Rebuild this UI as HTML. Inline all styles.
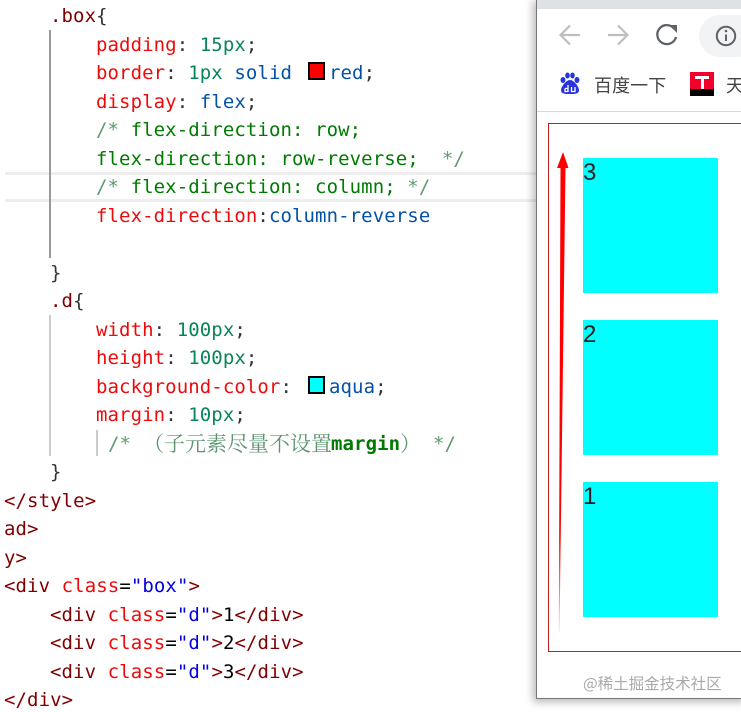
<!DOCTYPE html>
<html><head><meta charset="utf-8"><style>
html,body{margin:0;padding:0;background:#fff}
#r{position:relative;width:741px;height:712px;overflow:hidden;background:#fff}
.l{position:absolute;white-space:pre;font:19px/28px "DejaVu Sans Mono","Liberation Mono",monospace;letter-spacing:.09px;color:#333;margin-top:1px}
.a{position:absolute}
.p{color:#ee0a0a}.n{color:#098658}.v{color:#0451a5}.s{color:#800000}.c{color:#007a00}.g{color:#5f9a6f}.b{color:#0000e0}.t{color:#800000}.k{color:#000}
.sw{position:absolute;width:13px;height:14px;border:2px solid #000}
.cj{font:21px/28px "Noto Serif CJK SC","Noto Sans CJK SC",serif;color:#5c9470;letter-spacing:0;margin-top:0}
.box{position:absolute;left:583px;width:135px;height:135px;background:#0ff;color:#222;font:24px/30px "Liberation Sans",sans-serif}
.box span{position:absolute;left:0;top:0}
</style></head><body><div id="r">
<div class="a" style="left:5px;top:172px;width:531px;height:3px;background:#eeeeee"></div>
<div class="a" style="left:5px;top:199px;width:531px;height:3px;background:#eeeeee"></div>
<div class="a" style="left:49px;top:30px;width:1.5px;height:228px;background:#999"></div>
<div class="a" style="left:49px;top:315px;width:1.5px;height:141px;background:#ccc"></div>
<div class="a" style="left:96px;top:430px;width:1.5px;height:26px;background:#ccc"></div>

<div class="l" style="left:50px;top:1px"><span class="s">.box</span>{</div>
<div class="l" style="left:96px;top:30px"><span class="p">padding</span>: <span class="n">15px</span>;</div>
<div class="l" style="left:96px;top:58px"><span class="p">border</span>: <span class="n">1px</span> <span class="v">solid</span></div>
<div class="sw" style="left:308px;top:62px;background:#f00"></div>
<div class="l" style="left:329px;top:58px"><span class="v">red</span>;</div>
<div class="l" style="left:96px;top:87px"><span class="p">display</span>: <span class="v">flex</span>;</div>
<div class="l" style="left:96px;top:115px"><span class="g">/*</span> <span class="c">flex-direction: row;</span></div>
<div class="l" style="left:96px;top:144px"><span class="c">flex-direction: row-reverse;</span>  <span class="g">*/</span></div>
<div class="l" style="left:96px;top:172px"><span class="g">/*</span> <span class="c">flex-direction: column;</span> <span class="g">*/</span></div>
<div class="l" style="left:96px;top:201px"><span class="p">flex-direction</span>:<span class="v">column-reverse</span></div>
<div class="l" style="left:50px;top:258px">}</div>
<div class="l" style="left:50px;top:286px"><span class="s">.d</span>{</div>
<div class="l" style="left:96px;top:315px"><span class="p">width</span>: <span class="n">100px</span>;</div>
<div class="l" style="left:96px;top:343px"><span class="p">height</span>: <span class="n">100px</span>;</div>
<div class="l" style="left:96px;top:372px"><span class="p">background-color</span>:</div>
<div class="sw" style="left:308px;top:376px;background:#0ff"></div>
<div class="l" style="left:329px;top:372px"><span class="v">aqua</span>;</div>
<div class="l" style="left:96px;top:400px"><span class="p">margin</span>: <span class="n">10px</span>;</div>
<div class="l" style="left:108px;top:429px"><span class="g">/*</span></div>
<div class="l cj" style="left:143px;top:429px">（子元素尽量不设置</div>
<div class="l" style="left:331px;top:429px;font-weight:bold"><span class="c">margin</span></div>
<div class="l cj" style="left:400px;top:429px">）</div>
<div class="l" style="left:433px;top:429px"><span class="g">*/</span></div>
<div class="l" style="left:50px;top:457px">}</div>
<div class="l" style="left:4px;top:486px"><span class="t">&lt;/style&gt;</span></div>
<div class="l" style="left:4px;top:514px"><span class="t">ad&gt;</span></div>
<div class="l" style="left:4px;top:543px"><span class="t">y&gt;</span></div>
<div class="l" style="left:4px;top:571px"><span class="t">&lt;div</span> <span class="p">class</span><span class="k">=</span><span class="b">"box"</span><span class="t">&gt;</span></div>
<div class="l" style="left:50px;top:600px"><span class="t">&lt;div</span> <span class="p">class</span><span class="k">=</span><span class="b">"d"</span><span class="t">&gt;</span><span class="k">1</span><span class="t">&lt;/div&gt;</span></div>
<div class="l" style="left:50px;top:628px"><span class="t">&lt;div</span> <span class="p">class</span><span class="k">=</span><span class="b">"d"</span><span class="t">&gt;</span><span class="k">2</span><span class="t">&lt;/div&gt;</span></div>
<div class="l" style="left:50px;top:657px"><span class="t">&lt;div</span> <span class="p">class</span><span class="k">=</span><span class="b">"d"</span><span class="t">&gt;</span><span class="k">3</span><span class="t">&lt;/div&gt;</span></div>
<div class="l" style="left:4px;top:685px"><span class="t">&lt;/div&gt;</span></div>

<!-- browser window -->
<div class="a" style="left:536px;top:-2px;width:210px;height:699px;background:#fff;border:1px solid #777;box-shadow:-3px 3px 8px rgba(0,0,0,.28)"></div>
<div class="a" style="left:537px;top:0;width:204px;height:9px;background:#dee1e6"></div>
<div class="a" style="left:699px;top:15px;width:60px;height:42px;border-radius:21px;background:#f1f3f4"></div>
<svg class="a" style="left:537px;top:10px" width="204" height="50" viewBox="537 10 204 50" fill="none">
<path d="M580 35H561M570 25.500L560.500 35L570 44.500" stroke="#bcbec0" stroke-width="2.200"/>
<path d="M608 35H627M618 25.500L627.500 35L618 44.500" stroke="#bcbec0" stroke-width="2.200"/>
<path d="M674.500 29A9.500 9.500 0 1 0 676 37" stroke="#5f6368" stroke-width="2.300"/>
<path d="M669 25L677 33L677 25Z" fill="#5f6368"/>
<circle cx="726" cy="36" r="9.200" stroke="#5f6368" stroke-width="2"/>
<path d="M726 34.500V41" stroke="#5f6368" stroke-width="2"/><circle cx="726" cy="31" r="1.300" fill="#5f6368"/>
</svg>
<svg class="a" style="left:559px;top:72px" width="22" height="24" viewBox="0 0 22 24">
<ellipse cx="4" cy="8" rx="2.500" ry="3" fill="#2932e1"/><ellipse cx="8.500" cy="3.500" rx="2.300" ry="3" fill="#2932e1"/><ellipse cx="13.500" cy="3.500" rx="2.300" ry="3" fill="#2932e1"/><ellipse cx="18" cy="8" rx="2.500" ry="3" fill="#2932e1"/>
<path d="M11 8C7 8 2 15 2 18C2 22 6 22 11 22C16 22 20 22 20 18C20 15 15 8 11 8Z" fill="#2932e1"/>
<path d="M6 16.500V19.500H9V13M6 16.500H9M12.500 15V19.500H16V15" stroke="#fff" stroke-width="1.300" fill="none"/>
</svg>
<div class="l" style="left:594px;top:71px;margin-top:0;font:18px/28px 'Noto Sans CJK SC',sans-serif;color:#444">百度一下</div>
<div class="a" style="left:690px;top:72px;width:24px;height:24px;background:linear-gradient(#f0002a 0 17px,#000 17px)"></div>
<div class="a" style="left:695px;top:76px;width:14px;height:3px;background:#fff"></div>
<div class="a" style="left:700.500px;top:76px;width:3px;height:13px;background:#fff"></div>
<div class="l" style="left:726px;top:71px;margin-top:0;font:18px/28px 'Noto Sans CJK SC',sans-serif;color:#444">天</div>
<div class="a" style="left:537px;top:111px;width:204px;height:1px;background:#d9d9d9"></div>

<div class="a" style="left:548px;top:123px;width:200px;height:527px;border:1px solid #c81e1e"></div>
<div class="box" style="top:158px"><span>3</span></div>
<div class="box" style="top:320px"><span>2</span></div>
<div class="box" style="top:482px"><span>1</span></div>
<svg class="a" style="left:550px;top:145px" width="30" height="495" viewBox="550 145 30 495">
<defs><linearGradient id="f" x1="0" y1="0" x2="0" y2="1"><stop offset="0" stop-color="#f00"/><stop offset=".8" stop-color="#f00"/><stop offset="1" stop-color="#f00" stop-opacity=".15"/></linearGradient></defs>
<path d="M563 152L568.500 168H565.500L559.500 632L558.800 632L560.500 168H557.000Z" fill="url(#f)"/>
</svg>
<div class="l" style="left:583px;top:669px;margin-top:0;font:15.500px/28px 'Noto Sans CJK SC',sans-serif;letter-spacing:0;color:#a9a9a9">@稀土掘金技术社区</div>
</div></body></html>
